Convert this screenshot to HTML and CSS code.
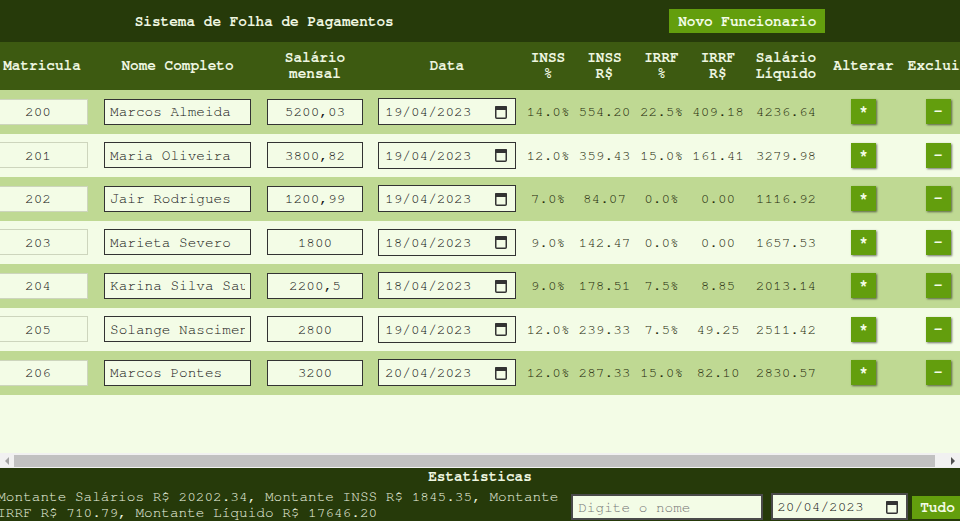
FILE: index.html
```html
<!DOCTYPE html>
<html lang="pt-BR">
<head>
<meta charset="utf-8">
<title>Sistema de Folha de Pagamentos</title>
<link rel="stylesheet" href="styles.css">
</head>
<body>
<header class="topbar">
  <h1 class="title">Sistema de Folha de Pagamentos</h1>
  <button class="btn btn-new">Novo Funcionario</button>
</header>
<main class="table-wrap">
  <div class="table-view">
    <table class="grid">
      <colgroup>
        <col class="c-mat"><col class="c-nome"><col class="c-sal"><col class="c-data"><col class="c-inssp"><col class="c-inssv"><col class="c-irrfp"><col class="c-irrfv"><col class="c-liq"><col class="c-alt"><col class="c-exc">
      </colgroup>
      <thead>
        <tr>
          <th>Matricula</th><th>Nome Completo</th><th>Salário<br>mensal</th><th>Data</th><th>INSS<br>%</th><th>INSS<br>R$</th><th>IRRF<br>%</th><th>IRRF<br>R$</th><th>Salário<br>Líquido</th><th>Alterar</th><th>Excluir</th>
        </tr>
      </thead>
      <tbody>
        <tr class="odd">
          <td class="left"><input class="in in-mat" value="200" readonly></td>
          <td><input class="in in-nome" value="Marcos Almeida"></td>
          <td><input class="in in-sal" value="5200,03"></td>
          <td><div class="datebox"><input class="date-text" value="19/04/2023"><svg class="cal" viewBox="0 0 12 14" width="12" height="14"><rect x="0.75" y="1.75" width="10.5" height="11.5" rx="1" fill="none" stroke="#333" stroke-width="1.5"/><rect x="0" y="1" width="12" height="4" rx="1" fill="#333"/></svg></div></td>
          <td>14.0%</td><td>554.20</td><td>22.5%</td><td>409.18</td><td>4236.64</td>
          <td><button class="btn btn-icon">*</button></td>
          <td><button class="btn btn-icon">-</button></td>
        </tr>
        <tr>
          <td class="left"><input class="in in-mat" value="201" readonly></td>
          <td><input class="in in-nome" value="Maria Oliveira"></td>
          <td><input class="in in-sal" value="3800,82"></td>
          <td><div class="datebox"><input class="date-text" value="19/04/2023"><svg class="cal" viewBox="0 0 12 14" width="12" height="14"><rect x="0.75" y="1.75" width="10.5" height="11.5" rx="1" fill="none" stroke="#333" stroke-width="1.5"/><rect x="0" y="1" width="12" height="4" rx="1" fill="#333"/></svg></div></td>
          <td>12.0%</td><td>359.43</td><td>15.0%</td><td>161.41</td><td>3279.98</td>
          <td><button class="btn btn-icon">*</button></td>
          <td><button class="btn btn-icon">-</button></td>
        </tr>
        <tr class="odd">
          <td class="left"><input class="in in-mat" value="202" readonly></td>
          <td><input class="in in-nome" value="Jair Rodrigues"></td>
          <td><input class="in in-sal" value="1200,99"></td>
          <td><div class="datebox"><input class="date-text" value="19/04/2023"><svg class="cal" viewBox="0 0 12 14" width="12" height="14"><rect x="0.75" y="1.75" width="10.5" height="11.5" rx="1" fill="none" stroke="#333" stroke-width="1.5"/><rect x="0" y="1" width="12" height="4" rx="1" fill="#333"/></svg></div></td>
          <td>7.0%</td><td>84.07</td><td>0.0%</td><td>0.00</td><td>1116.92</td>
          <td><button class="btn btn-icon">*</button></td>
          <td><button class="btn btn-icon">-</button></td>
        </tr>
        <tr>
          <td class="left"><input class="in in-mat" value="203" readonly></td>
          <td><input class="in in-nome" value="Marieta Severo"></td>
          <td><input class="in in-sal" value="1800"></td>
          <td><div class="datebox"><input class="date-text" value="18/04/2023"><svg class="cal" viewBox="0 0 12 14" width="12" height="14"><rect x="0.75" y="1.75" width="10.5" height="11.5" rx="1" fill="none" stroke="#333" stroke-width="1.5"/><rect x="0" y="1" width="12" height="4" rx="1" fill="#333"/></svg></div></td>
          <td>9.0%</td><td>142.47</td><td>0.0%</td><td>0.00</td><td>1657.53</td>
          <td><button class="btn btn-icon">*</button></td>
          <td><button class="btn btn-icon">-</button></td>
        </tr>
        <tr class="odd">
          <td class="left"><input class="in in-mat" value="204" readonly></td>
          <td><input class="in in-nome" value="Karina Silva Sauer"></td>
          <td><input class="in in-sal" value="2200,5"></td>
          <td><div class="datebox"><input class="date-text" value="18/04/2023"><svg class="cal" viewBox="0 0 12 14" width="12" height="14"><rect x="0.75" y="1.75" width="10.5" height="11.5" rx="1" fill="none" stroke="#333" stroke-width="1.5"/><rect x="0" y="1" width="12" height="4" rx="1" fill="#333"/></svg></div></td>
          <td>9.0%</td><td>178.51</td><td>7.5%</td><td>8.85</td><td>2013.14</td>
          <td><button class="btn btn-icon">*</button></td>
          <td><button class="btn btn-icon">-</button></td>
        </tr>
        <tr>
          <td class="left"><input class="in in-mat" value="205" readonly></td>
          <td><input class="in in-nome" value="Solange Nascimento"></td>
          <td><input class="in in-sal" value="2800"></td>
          <td><div class="datebox"><input class="date-text" value="19/04/2023"><svg class="cal" viewBox="0 0 12 14" width="12" height="14"><rect x="0.75" y="1.75" width="10.5" height="11.5" rx="1" fill="none" stroke="#333" stroke-width="1.5"/><rect x="0" y="1" width="12" height="4" rx="1" fill="#333"/></svg></div></td>
          <td>12.0%</td><td>239.33</td><td>7.5%</td><td>49.25</td><td>2511.42</td>
          <td><button class="btn btn-icon">*</button></td>
          <td><button class="btn btn-icon">-</button></td>
        </tr>
        <tr class="odd">
          <td class="left"><input class="in in-mat" value="206" readonly></td>
          <td><input class="in in-nome" value="Marcos Pontes"></td>
          <td><input class="in in-sal" value="3200"></td>
          <td><div class="datebox"><input class="date-text" value="20/04/2023"><svg class="cal" viewBox="0 0 12 14" width="12" height="14"><rect x="0.75" y="1.75" width="10.5" height="11.5" rx="1" fill="none" stroke="#333" stroke-width="1.5"/><rect x="0" y="1" width="12" height="4" rx="1" fill="#333"/></svg></div></td>
          <td>12.0%</td><td>287.33</td><td>15.0%</td><td>82.10</td><td>2830.57</td>
          <td><button class="btn btn-icon">*</button></td>
          <td><button class="btn btn-icon">-</button></td>
        </tr>
      </tbody>
    </table>
  </div>
  <div class="hscroll">
    <span class="sb-btn"><span class="arrow-left"></span></span>
    <div class="sb-track"><div class="sb-thumb"></div></div>
    <span class="sb-btn"><span class="arrow-right"></span></span>
  </div>
</main>
<footer class="stats">
  <h2 class="stats-title">Estatísticas</h2>
  <div class="stats-row">
    <p class="stats-text">Montante Salários R$ 20202.34, Montante INSS R$ 1845.35, Montante IRRF R$ 710.79, Montante Líquido R$ 17646.20</p>
    <input class="in in-search" placeholder="Digite o nome">
    <div class="datebox datebox-filter"><input class="date-text" value="20/04/2023"><svg class="cal" viewBox="0 0 12 14" width="12" height="14"><rect x="0.75" y="1.75" width="10.5" height="11.5" rx="1" fill="none" stroke="#333" stroke-width="1.5"/><rect x="0" y="1" width="12" height="4" rx="1" fill="#333"/></svg></div>
    <button class="btn btn-all">Tudo</button>
  </div>
</footer>
</body>
</html>
```
FILE: styles.css
```css
html, body {
  margin: 0;
  height: 100%;
}
body {
  display: flex;
  flex-direction: column;
  font-family: "Nimbus Mono PS", "Nimbus Mono L", "FreeMono", "Courier New", "Liberation Mono", monospace;
  font-size: 14.4px;
  background: #f3fce6;
  color: #1f2a0c;
  overflow: hidden;
}
.topbar {
  flex: none;
  height: 42px;
  background: #263a0a;
  display: flex;
  justify-content: space-around;
  align-items: center;
}
.title {
  margin: 0;
  font-size: 14.4px;
  font-weight: bold;
  color: #eef6e0;
}
.btn {
  font-family: inherit;
  font-size: 14.4px;
  font-weight: bold;
  color: #f3fce6;
  background: #639e0d;
  border: none;
  padding: 0;
  cursor: pointer;
}
.btn-new {
  height: 24px;
  padding: 0 9px;
  margin-left: 6px;
}
.table-wrap {
  flex: 1;
  min-height: 0;
  display: flex;
  flex-direction: column;
}
.table-view {
  flex: 1;
  min-height: 0;
  display: flex;
  justify-content: center;
  align-items: flex-start;
  overflow: hidden;
}
.grid {
  flex: none;
  width: 984px;
  table-layout: fixed;
  border-collapse: collapse;
}
.c-mat { width: 108px; }
.c-nome { width: 163px; }
.c-sal { width: 112px; }
.c-data { width: 152px; }
.c-inssp { width: 50px; }
.c-inssv { width: 63px; }
.c-irrfp { width: 51px; }
.c-irrfv { width: 62px; }
.c-liq { width: 74px; }
.c-alt { width: 81px; }
.c-exc { width: 68px; }
.grid th {
  height: 48px;
  padding: 0;
  background: #3d5a11;
  color: #eef6e0;
  font-weight: bold;
  line-height: 16px;
  white-space: nowrap;
}
.grid td {
  height: 43.5px;
  padding: 0;
  text-align: center;
  white-space: nowrap;
}
.grid td.left {
  text-align: left;
}
.grid tr.odd td {
  background: #bfd993;
}
.in {
  box-sizing: border-box;
  font-family: inherit;
  font-size: 14.4px;
  color: #111;
  background: #f3fce6;
  border: 1px solid #333;
  border-radius: 0;
  margin: 0;
  vertical-align: middle;
}
.in-mat {
  width: 100px;
  height: 26px;
  text-align: center;
  border-color: #cdd5bd;
}
.in-nome {
  width: 147px;
  height: 26px;
  padding: 0 5px;
}
.in-sal {
  width: 96px;
  height: 26px;
  text-align: center;
}
.datebox {
  box-sizing: border-box;
  display: inline-flex;
  align-items: center;
  vertical-align: middle;
  width: 138px;
  height: 27px;
  padding: 0 8px 0 6px;
  background: #f3fce6;
  border: 1px solid #333;
}
.date-text {
  flex: 1;
  min-width: 0;
  border: none;
  padding: 0;
  margin: 0;
  background: transparent;
  font-family: inherit;
  font-size: 14.4px;
  color: #111;
}
.cal {
  flex: none;
  display: block;
}
.btn-icon {
  width: 25px;
  height: 25px;
  vertical-align: middle;
  box-shadow: 1px 1px 2px rgba(0, 0, 0, 0.55);
}
.hscroll {
  flex: none;
  height: 15px;
  display: flex;
  background: #f1f1f1;
}
.sb-btn {
  flex: none;
  width: 14px;
  display: flex;
  align-items: center;
  justify-content: center;
}
.arrow-left {
  width: 0;
  height: 0;
  border-top: 4px solid transparent;
  border-bottom: 4px solid transparent;
  border-right: 4px solid #a3a3a3;
}
.arrow-right {
  width: 0;
  height: 0;
  border-top: 4px solid transparent;
  border-bottom: 4px solid transparent;
  border-left: 4px solid #505050;
}
.sb-track {
  flex: 1;
  padding: 2px 0 1px;
  box-sizing: border-box;
}
.sb-thumb {
  width: 98.8%;
  height: 100%;
  background: #c1c1c1;
}
.stats {
  flex: none;
  height: 53px;
  background: #263a0a;
  color: #eef6e0;
  overflow: hidden;
}
.stats-title {
  margin: 0;
  font-size: 14.4px;
  line-height: 18px;
  font-weight: bold;
  text-align: center;
}
.stats-row {
  margin-top: 3px;
  display: flex;
  justify-content: center;
  align-items: flex-end;
}
.stats-text {
  flex: none;
  width: 572px;
  margin: 0;
  line-height: 16px;
}
.in-search {
  flex: none;
  width: 192px;
  height: 26px;
  padding: 0 5px;
  margin: 0 0 1px 2px;
  border: 2px solid #4a4a4a;
}
.datebox-filter {
  flex: none;
  width: 137px;
  height: 27px;
  margin: 0 0 1px 8px;
  padding: 0 8px 0 4px;
  border: 2px solid #4a4a4a;
}
.btn-all {
  flex: none;
  height: 23px;
  padding: 0 8px;
  margin: 0 0 2px 4px;
}
```
